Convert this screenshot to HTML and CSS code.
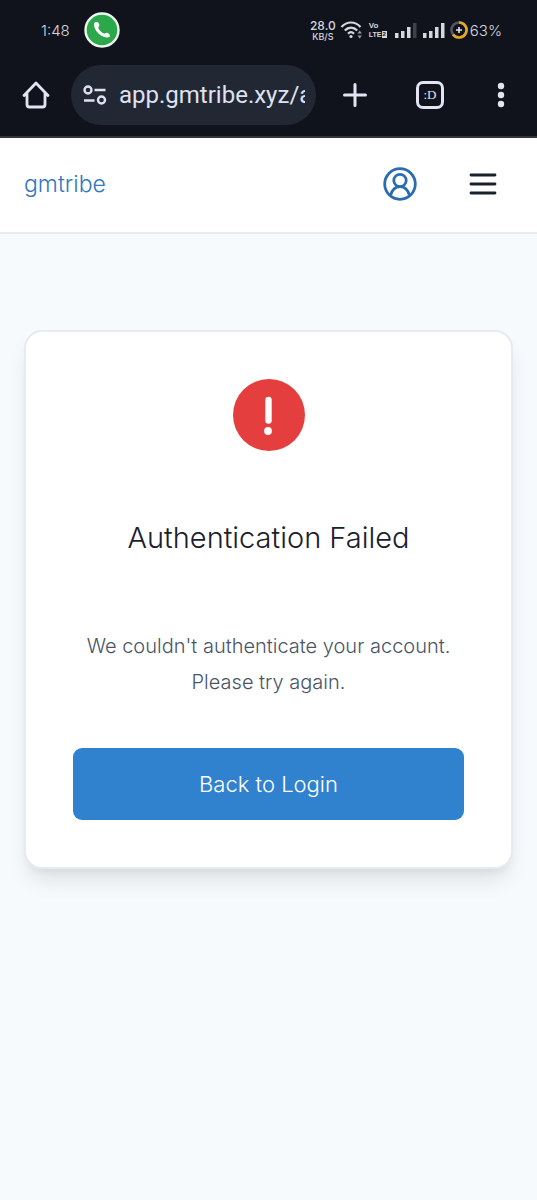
FILE: index.html
```html
<!DOCTYPE html>
<html lang="en">
<head>
<meta charset="utf-8">
<meta name="viewport" content="width=device-width, initial-scale=1">
<title>gmtribe</title>
<link rel="stylesheet" href="styles.css">
</head>
<body>
<div class="chrome">
  <div class="status">
    <span class="clock">1:48</span>
    <svg class="call" viewBox="0 0 36 36" aria-hidden="true"><circle cx="18" cy="18" r="16.500" fill="#2ba84a" stroke="#eefaf0" stroke-width="2.400"/><path d="M10 12c.3-1.700 1.300-2.200 2.900-2 1.300.2 2.200 1.700 2.500 3.100.2 1.200-1.300 1.800-1 2.900.8 2.400 3.200 4.700 5.600 5.600 1 .3 1.700-1.200 2.900-.9 1.600.4 3 1.500 3 2.900 0 1.500-1.300 2-2.900 1.900C15.800 25 9.800 18 10 12z" fill="#fff"/></svg>
    <div class="indicators">
      <span class="rate"><b>28.0</b><small>KB/S</small></span>
      <svg class="wifi" viewBox="0 0 24 20" fill="none" stroke="#d6d8de" stroke-width="2.200" aria-hidden="true"><path d="M1.500 7C7 1 15 1 20.500 7M4.800 10.500c3.600-3.800 8.800-3.800 12.400 0M8 13.700c1.800-1.800 4.200-1.800 6 0"/><circle cx="11" cy="16.500" r="1.600" fill="#d6d8de" stroke="none"/><path d="M17.500 13.500l2.200-3 2.200 3zM17.500 15.500l2.200 3 2.200-3z" fill="#9a9ca5" stroke="none"/></svg>
      <span class="lte"><span>Vo</span><span class="net">LTE<i>2</i></span></span>
      <svg class="signal" viewBox="0 0 22 16" aria-hidden="true"><path d="M0 11h3.500v5H0zM6 9h3.500v7H6zM12 5h3.500v11H12z" fill="#d6d8de"/><path d="M18 1h3.500v15H18z" fill="#3e414b"/></svg>
      <svg class="signal last" viewBox="0 0 22 16" aria-hidden="true"><path d="M0 11h3.500v5H0zM6 9h3.500v7H6zM12 5h3.500v11H12zM18 1h3.500v15H18z" fill="#d6d8de"/></svg>
      <svg class="battery" viewBox="0 0 18 18" fill="none" aria-hidden="true"><circle cx="9" cy="9" r="7.500" stroke="#565861" stroke-width="2.600"/><path d="M9 1.500A7.500 7.500 0 1 1 3 13.500" stroke="#e5a823" stroke-width="2.600"/><path d="M9 6v6M6 9h6" stroke="#e4e5ea" stroke-width="1.600"/></svg>
      <span class="percent">63%</span>
    </div>
  </div>
  <div class="toolbar">
    <button class="tool home" aria-label="Home"><svg viewBox="0 0 28 28" fill="none" stroke="#e3e4f3" stroke-width="2.800" stroke-linejoin="round" stroke-linecap="round"><path d="M2 14.500L14 2l12 12.500M5 12.500v11q0 2.500 2.500 2.500h13q2.500 0 2.500-2.500v-11"/></svg></button>
    <div class="address">
      <svg viewBox="0 0 24 20" fill="none" stroke="#dfe1f0" stroke-width="2.400" aria-hidden="true"><circle cx="5" cy="5" r="3.500"/><circle cx="18.500" cy="15" r="3.500"/><path d="M11.500 5H22.500M1 15.500h10.500"/></svg>
      <input type="text" aria-label="Address" value="app.gmtribe.xyz/auth">
    </div>
    <button class="tool plus" aria-label="New tab"><svg viewBox="0 0 28 28" fill="none" stroke="#e3e4f3" stroke-width="3" stroke-linecap="round"><path d="M14 3.500v21M3.500 14h21"/></svg></button>
    <button class="tool tabs" aria-label="Tabs">:D</button>
    <button class="tool more" aria-label="More"><svg viewBox="0 0 28 28" fill="#e3e4f3"><circle cx="14" cy="5" r="3.200"/><circle cx="14" cy="14" r="3.200"/><circle cx="14" cy="23" r="3.200"/></svg></button>
  </div>
</div>
<header class="site">
  <a class="brand" href="#">gmtribe</a>
  <button class="nav" aria-label="Account"><svg viewBox="0 0 34 34" fill="none" stroke="#2b6cb0" stroke-width="2.800"><circle cx="17" cy="17" r="15.300"/><circle cx="17" cy="13.500" r="6.200"/><path d="M7.500 28.500c1.500-5.500 5-8.800 9.500-8.800s8 3.300 9.500 8.800"/></svg></button>
  <button class="nav" aria-label="Menu"><svg viewBox="0 0 34 34" fill="none" stroke="#1a202c" stroke-width="2.800" stroke-linecap="round"><path d="M5 8h24M5 17h24M5 26h24"/></svg></button>
</header>
<main>
  <section class="card">
    <svg class="alert" viewBox="0 0 72 72" aria-hidden="true"><circle cx="36" cy="36" r="36" fill="#e53e3e"/><path d="M35.500 21v20.500" stroke="#fff" stroke-width="6.400" stroke-linecap="round"/><circle cx="35" cy="52" r="3.900" fill="#fff"/></svg>
    <h1>Authentication Failed</h1>
    <p>We couldn't authenticate your account.<br>Please try again.</p>
    <button class="login">Back to Login</button>
  </section>
</main>
</body>
</html>
```
FILE: styles.css
```css
* { box-sizing: border-box; }
body {
  margin: 0;
  min-height: 100vh;
  background: #f6fafd;
  color: #1a202c;
  font-family: Inter, "Liberation Sans", sans-serif;
  font-weight: 300;
}
button { border: 0; padding: 0; background: none; font: inherit; cursor: pointer; }
svg { display: block; }

.chrome { background: #11131c; border-bottom: 2px solid #34363d; }
.status {
  display: flex;
  align-items: center;
  height: 60px;
  padding: 0 35px 0 41px;
  color: #d6d8de;
}
.clock { width: 43px; font-size: 15px; }
.call { width: 36px; height: 36px; }
.indicators { display: flex; align-items: center; margin-left: auto; }
.rate { display: flex; flex-direction: column; align-items: center; width: 26px; }
.rate b { font-size: 12px; line-height: 12px; font-weight: 500; }
.rate small { font-size: 9px; line-height: 9px; font-weight: 500; }
.wifi { width: 24px; height: 20px; margin-left: 4px; }
.lte {
  display: flex;
  flex-direction: column;
  width: 20px;
  margin: 0 6px 0 5px;
  font: 700 8px/9px "Liberation Sans", sans-serif;
}
.net { display: flex; align-items: center; font-size: 7px; }
.lte i { padding: 0 1px; font-style: normal; font-size: 6px; line-height: 7px; background: #d6d8de; color: #11131c; }
.signal { width: 22px; height: 16px; }
.signal.last { margin-left: 6px; }
.battery { width: 18px; height: 18px; margin: 0 2px 0 5px; }
.percent { font-size: 15px; }

.toolbar { display: flex; align-items: center; height: 76px; padding: 0 16px 6px 22px; }
.tool { display: grid; place-items: center; flex: none; width: 40px; height: 40px; color: #e3e4f3; }
.tool svg { width: 28px; height: 28px; }
.home { width: 28px; margin-right: 21px; }
.address {
  display: flex;
  align-items: center;
  gap: 12px;
  flex: 1;
  min-width: 0;
  height: 60px;
  padding: 0 11px 0 12px;
  border-radius: 30px;
  background: #222734;
}
.address svg { flex: none; width: 24px; height: 20px; }
.address input {
  flex: 1;
  min-width: 0;
  width: 0;
  padding: 0;
  border: 0;
  outline: 0;
  background: none;
  color: #dfe1f0;
  font: 400 24px/32px Roboto, sans-serif;
}
.plus { margin-left: 19px; }
.tabs { width: 28px; height: 28px; margin: 0 37px 0 41px; border: 3px solid #e3e4f3; border-radius: 7px; font: 400 13px/14px "Liberation Serif", serif; }

.site {
  display: flex;
  align-items: center;
  gap: 49px;
  height: 96px;
  padding: 0 37px 2px 24px;
  background: #fff;
  border-bottom: 2px solid #e8ecf0;
}
.brand { margin-right: auto; color: #3178be; font-size: 23px; text-decoration: none; }
.nav svg { width: 34px; height: 34px; }

main { padding: 96px 24px; }
.card {
  display: flex;
  flex-direction: column;
  align-items: center;
  padding: 47px;
  border: 2px solid #e6ebf1;
  border-radius: 18px;
  background: #fff;
  box-shadow: 0 15px 22px -5px rgba(0, 0, 0, .1), 0 6px 9px -3px rgba(0, 0, 0, .05);
  text-align: center;
}
.alert { width: 72px; height: 72px; }
h1 { margin: 65px 0 68px; font-size: 29px; line-height: 44px; font-weight: 300; }
p { margin: 0 0 48px; color: #4a5568; font-size: 20px; line-height: 36px; }
.login { width: 100%; height: 72px; border-radius: 9px; background: #3182ce; color: #fff; font-size: 22px; }
```
